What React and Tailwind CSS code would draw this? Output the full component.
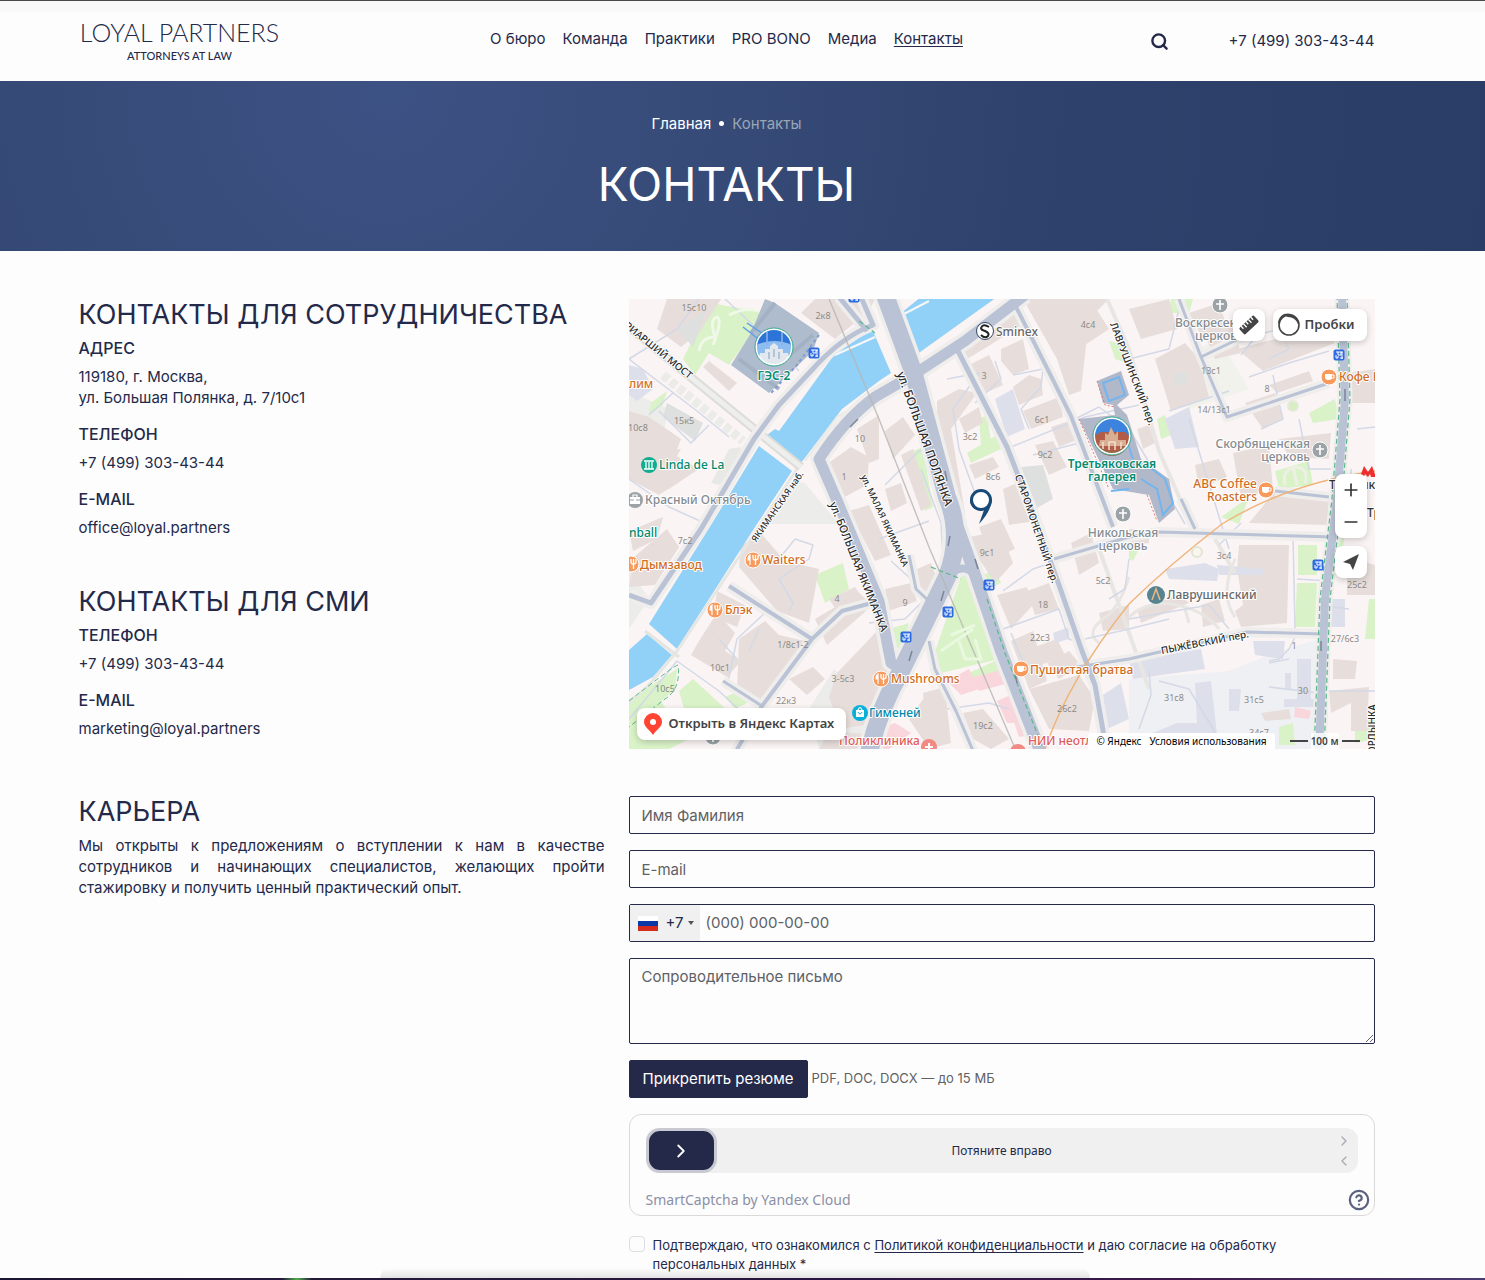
import React, { useState } from "react";
import { Search, ChevronRight, ChevronLeft, CircleQuestionMark, Plus, Minus } from "lucide-react";

const navItems = ["О бюро", "Команда", "Практики", "PRO BONO", "Медиа", "Контакты"];

const buildings = [
  "38,0 92,0 70,34 52,48 28,30", "186,0 246,0 240,12 206,40 172,14",
  "80,62 108,84 100,92 74,68", "0,112 20,118 52,140 46,156 70,170 30,196 0,180",
  "28,152 52,150 44,164 60,176 40,190", "198,165 222,148 240,158 238,186 212,200",
  "228,130 250,116 250,160 240,164", "220,212 240,206 262,256 246,262",
  "334,48 346,36 384,10 393,26 358,48 338,60", "340,66 360,56 374,86 352,96",
  "372,50 394,40 400,70 384,76 372,62", "384,88 400,76 412,80 414,96 390,106",
  "308,102 330,90 348,94 322,130 336,214 322,214 308,150",
  "330,120 350,108 354,124 336,134", "394,0 480,0 460,20 452,92 440,96 428,60",
  "446,14 466,8 480,30 456,46", "394,112 430,98 434,118 402,130",
  "422,128 440,122 450,140 430,148", "406,146 424,142 438,168 420,176",
  "340,166 364,158 370,168 346,180", "374,190 398,180 406,222 380,226",
  "350,228 372,220 386,250 362,260", "256,132 274,118 286,136 264,160",
  "272,156 284,150 302,206 292,212", "256,190 272,184 278,204 262,212",
  "526,60 556,44 570,60 580,98 542,112", "500,10 540,0 548,30 512,40",
  "574,32 604,28 612,54 586,60", "608,50 700,26 706,44 634,72",
  "616,104 646,94 654,120 634,130", "640,86 680,72 684,82 648,94",
  "560,14 590,4 598,28 572,36", "604,154 640,146 644,190 612,200",
  "566,166 590,160 598,178 570,190", "508,130 520,126 526,144 514,150",
  "648,190 700,200 698,226 620,224", "650,140 702,134 700,160 660,158",
  "720,74 746,70 746,104 722,104", "610,246 660,246 658,324 612,328 606,312 614,306 608,270",
  "508,310 550,296 560,304 512,324", "572,306 590,300 596,322 574,328",
  "704,360 728,362 726,380 704,380", "700,392 740,388 738,432 722,432 722,404 702,414",
  "632,414 660,410 662,420 636,422", "718,272 732,262 746,266 746,296 718,296",
  "5,258 38,230 50,248 26,286 0,288", "0,232 34,218 28,240 4,252",
  "112,248 130,232 156,262 190,270 180,324 148,312 110,268", "88,292 116,306 108,328 84,318",
  "70,342 88,314 106,334 96,352 112,362 98,378 62,356",
  "110,340 136,322 150,336 176,342 172,360 130,404 108,392",
  "186,320 230,294 244,306 198,346", "200,300 226,288 234,300 208,312",
  "160,380 184,368 196,380 178,396", "200,398 208,374 250,330 262,372 236,426 212,430",
  "256,290 282,284 288,302 260,312", "284,272 302,264 308,280 292,298",
  "340,238 372,232 384,264 366,284 350,260", "368,296 398,288 404,306 382,330",
  "398,292 420,284 430,310 406,316", "382,342 404,332 418,382 400,390",
  "400,350 428,340 436,356 412,366", "418,364 440,352 452,366 430,380",
  "400,390 450,376 466,400 460,432 420,430", "294,394 316,388 322,444 300,450",
  "334,414 354,410 380,440 362,450 344,440", "442,244 462,234 470,264 450,276",
  "470,314 500,306 500,330 474,332", "500,230 520,230 520,244 502,246",
  "200,432 250,436 240,450 190,450", "280,420 300,392 320,440 300,450",
];
const lilac = [
  "0,66 14,70 24,90 8,102 0,96", "366,100 384,90 396,130 378,138", "536,120 560,108 570,148 546,150",
  "536,270 576,264 590,270 588,282 540,280", "500,362 572,350 576,370 504,380", "624,342 656,342 654,360 626,356",
  "588,266 636,270 634,276 590,276", "702,300 716,300 716,328 702,328", "566,384 582,382 588,436 504,442 548,424 568,424",
  "668,360 682,360 682,400 668,400", "600,390 612,390 610,412 600,412", "474,396 492,384 500,420 478,430", "655,400 690,400 690,408 655,408",
  "424,334 440,328 440,340 426,344", "656,374 662,374 662,390 656,390",
];
const parks = [
  "82,4 138,14 100,66 80,54 66,76 54,60", "22,104 38,92 34,106 20,116", "284,152 294,148 304,208 296,212",
  "338,154 368,136 372,150 342,164", "350,120 358,116 362,142 352,146", "216,214 226,210 236,222 234,228",
  "186,276 214,264 220,290 196,304", "154,272 164,274 158,286 152,284", "334,272 344,270 356,304 370,360 312,374 302,364",
  "340,374 366,362 372,372 344,380", "354,276 366,270 372,284 360,290", "260,330 280,324 274,348 266,350",
  "50,392 64,380 110,422 80,440 58,420", "0,400 48,370 46,390 0,430", "0,430 30,400 60,440 40,450 0,450",
  "96,398 118,388 126,400 106,410", "646,172 680,162 684,186 650,190", "592,218 620,198 610,225", "680,114 706,100 710,120 684,124",
  "669,246 688,246 688,276 669,276", "668,284 688,284 686,328 666,328", "480,42 496,46 498,64 486,60", "528,120 536,116 542,136 532,140",
  "650,428 664,424 666,446 650,446", "708,250 716,230 712,270 704,280", "542,0 564,0 560,14 540,14", "726,418 746,412 746,440 726,444",
  "740,300 746,300 746,340 736,340", "500,232 510,250 504,262 500,260",
];
const clinics = ["318,382 340,370 350,390 332,396", "344,378 376,370 380,384 350,392", "368,402 386,394 394,424 378,424", "232,436 266,424 282,434 260,450 230,450", "384,420 398,420 402,436 390,438", "666,408 682,412 680,420 665,418"];

const minorStreets = [
  "0,60 68,112 100,138", "0,180 40,208 80,226", "96,0 124,26 170,72", "70,0 48,30 0,60", "20,116 44,94", "30,112 62,144 80,126",
  "292,170 312,224 314,260", "318,80 350,74 324,110 330,150 348,200", "384,76 414,70 412,88 392,110 400,130", "382,148 456,118 510,106",
  "346,104 372,80 366,62", "404,156 450,144 470,190", "500,60 540,50 550,10", "560,120 600,250", "540,112 600,92",
  "666,330 664,236 700,240", "670,330 660,350 650,360 640,362", "612,56 628,36 650,30 660,50 640,60", "620,78 660,64 700,52",
  "644,76 648,96 654,120 632,130", "670,120 680,170 702,170", "668,280 700,282", "704,308 720,310", "374,292 404,270 440,258",
  "374,330 430,310 440,340 456,346", "382,334 396,368 410,372", "318,410 360,404 380,410", "150,260 166,240 184,246 180,260 150,280 164,304 160,312",
  "140,310 108,340 100,378 94,386", "130,330 120,352", "90,340 108,360", "262,262 282,280 296,300 276,320 240,324", "250,240 300,222",
  "256,186 290,152 316,140", "520,372 522,396 510,430", "530,382 560,390 590,440", "640,364 660,360", "640,388 690,394",
  "500,320 580,306 600,330", "590,246 612,224", "700,392 746,392", "722,170 722,225", "728,130 746,128", "456,340 500,330 540,320",
  "480,300 496,290 500,260", "446,120 470,108 500,130 530,180 556,225", "0,420 30,384 48,362 90,392 120,420",
];

const mainRoads = [
  { d: "M256 -4 L284 72 L318 198 Q334 236 318 278 L272 372 Q250 410 240 454", w: 18 },
  { d: "M326 220 L344 270 L372 352 L412 454", w: 12 },
  { d: "M396 -4 L336 42 L284 76 L246 98 Q216 120 190 160 L210 206 L250 302 L262 364 L276 372", w: 11 },
  { d: "M318 278 Q334 262 346 276", w: 8 },
  { d: "M210 -2 L238 32", w: 5 },
  { d: "M232 -2 L244 26 Q212 38 182 72 L150 106 L125 140 L72 230 L22 304 L0 296", w: 5 },
  { d: "M328 50 L378 148 L408 225 L430 286 L453 352 L466 386 L478 454", w: 5 },
  { d: "M383 0 L417 67 L442 117 L484 228", w: 4 },
  { d: "M550 0 L572 58 L598 118 L700 84", w: 3 },
  { d: "M572 58 L630 30", w: 3 },
  { d: "M425 260 L500 238 L530 233 L704 238", w: 3 },
  { d: "M448 368 L500 360 L618 333 L693 335", w: 3 },
  { d: "M100 287 L183 340", w: 4 },
  { d: "M250 302 L213 312 L183 340 L133 407 L106 454", w: 4 },
  { d: "M94 382 L133 407", w: 3 },
  { d: "M280 256 L287 290 L302 304", w: 3 },
  { d: "M300 342 L306 370 L327 412 L345 454", w: 3 },
  { d: "M646 192 L700 198", w: 3 },
  { d: "M552 200 L566 230", w: 3 },
  { d: "M713 -4 L716 100 L708 200 L696 300 L690 454", w: 8 },
];

const houseNumbers = [
  ["15с10", 65, 12], ["2к8", 194, 20], ["15к5", 55, 125], ["10с8", 9, 132], ["10", 231, 143], ["1", 215, 181], ["4с4", 459, 29],
  ["3", 355, 80], ["3с2", 341, 141], ["6с1", 413, 124], ["9с2", 416, 159], ["8с6", 364, 181], ["13с1", 582, 75], ["8", 638, 93],
  ["14/13с1", 585, 114], ["7с2", 56, 245], ["4", 208, 303], ["1/8с1-2", 164, 349], ["10с1", 91, 372], ["10с5", 36, 393],
  ["3-5с3", 214, 383], ["22к3", 157, 405], ["9с1", 358, 257], ["9", 276, 307], ["18", 414, 309], ["22с3", 411, 342], ["26с2", 438, 413],
  ["19с2", 354, 430], ["5с2", 474, 285], ["3с4", 595, 260], ["25с2", 728, 289], ["27/6с3", 716, 343], ["1", 665, 350],
  ["30", 674, 395], ["31с8", 545, 402], ["31с5", 625, 404], ["34с7", 630, 437],
];

const streetNames = [
  ["ул. БОЛЬШАЯ ПОЛЯНКА", 295, 140, 70, 12], ["ул. БОЛЬШАЯ ЯКИМАНКА", 229, 268, 68, 11], ["ул. МАЛАЯ ЯКИМАНКА", 255, 222, 65, 9],
  ["ЯКИМАНСКАЯ наб.", 149, 208, -55, 9], ["СТАРОМОНЕТНЫЙ пер.", 407, 230, 71, 10], ["ЛАВРУШИНСКИЙ пер.", 503, 75, 69, 10],
  ["ПЫЖЁВСКИЙ пер.", 576, 344, -11, 10], ["РИАРШИЙ МОСТ", 29, 52, 39, 10], ["ОРДЫНКА", 744, 430, -90, 10],
];

const places = [
  ["Sminex", 367, 37, "#666666"], ["Linda de La", 30, 170, "#00896f"], ["Красный Октябрь", 16, 205, "#858b90"],
  ["nball", 0, 238, "#00896f"], ["лим", 0, 89, "#d87226"], ["Дымзавод", 11, 270, "#cf6d22"], ["Waiters", 133, 265, "#cf6d22"],
  ["Блэк", 96, 315, "#cf6d22"], ["Mushrooms", 262, 384, "#cf6d22"], ["Гименей", 240, 418, "#0089ad"], ["Поликлиника", 210, 446, "#df5c58"],
  ["НИИ неотло", 399, 446, "#df5c58"], ["Пушистая братва", 401, 375, "#cf6d22"], ["Лаврушинский", 538, 300, "#66696c"],
  ["Кофе Культ", 710, 82, "#cf6d22"], ["Третьяковская", 700, 190, "#333333"], ["Третьяков", 738, 218, "#333333"],
];

function CafeIcon({ x, y }) {
  return (
    <g transform={`translate(${x} ${y})`}>
      <circle r="8" fill="#f79a5c" stroke="#fff" strokeWidth="1" />
      <path d="M-4 -3H3V0Q3 3 0 3H-1Q-4 3 -4 0Z" fill="#fff" />
      <path d="M3 -2H5V1H2" fill="none" stroke="#fff" />
    </g>
  );
}

function FoodIcon({ x, y }) {
  return (
    <g transform={`translate(${x} ${y})`}>
      <circle r="8" fill="#f79a5c" stroke="#fff" strokeWidth="1" />
      <path d="M-3 5V-5Q-5 -4 -5 0H-3" fill="#fff" stroke="#fff" strokeWidth="1.2" />
      <path d="M0 -5V-2Q0 0 2 0Q5 0 5 -2V-5M2.5 -5V5" fill="none" stroke="#fff" strokeWidth="1.3" />
    </g>
  );
}

function ChurchIcon({ x, y }) {
  return (
    <g transform={`translate(${x} ${y})`}>
      <circle r="8" fill="#9ba3a6" stroke="#fff" strokeWidth="1" />
      <path d="M0 -5V5M-4 -1H4" stroke="#fff" strokeWidth="1.6" />
    </g>
  );
}

function StopIcon({ x, y }) {
  return (
    <g transform={`translate(${x} ${y})`}>
      <rect x="-5.5" y="-5.5" width="11" height="11" rx="2" fill="#2e6be0" />
      <path d="M-3 -3H4M-1 -3V0H2V-3M3 -3V4M-3 0V3H-1V1M1 3H4" fill="none" stroke="#fff" strokeWidth="1" />
    </g>
  );
}

function CityMap() {
  return (
    <svg
      viewBox="0 0 746 450"
      preserveAspectRatio="xMidYMid slice"
      className="block h-full w-full font-['Noto_Sans',sans-serif]"
      role="img"
      aria-label="Карта: ул. Большая Полянка, 7/10с1"
    >
      <rect width="746" height="450" fill="#fbf4f5" />
      <path d="M500 380L600 372L650 352L690 340V450H500Z" fill="#eff0f4" />
      <path d="M0 92L40 110L30 150L0 160Z M163 182L176 184L210 225H132Z M0 270L20 300L0 330Z M180 410L205 370L250 410L240 450H190Z" fill="#ecedea" />
      <path d="M100 150L112 148L114 168L90 186L82 184Z" fill="#e8e8e5" />
      <path d="M546 60L590 40L620 90L560 110Z" fill="#f1f2eb" />
      {parks.map((p) => <polygon key={p} points={p} fill="#d9f2c8" />)}
      {buildings.map((p) => <polygon key={p} points={p} fill="#e7dedb" />)}
      {lilac.map((p) => <polygon key={p} points={p} fill="#dddfea" />)}
      {clinics.map((p) => <polygon key={p} points={p} fill="#f9d6dc" />)}
      <path d="M48 30L78 10L64 48Z M38 104L74 124L66 142L34 118Z M392 168L414 166L424 200L406 210Z" fill="#dedfdf" />
      <path d="M544 76L556 72L560 82L546 88Z" fill="#dedfdf" />

      {/* river */}
      <path d="M205 56L243 30L250 46L262 74L250 82L213 110L172 164L138 136L146 130L150 132Z" fill="#91d1f8" />
      <path d="M272 14L292 -2H368L287 56Z" fill="#91d1f8" />
      <path d="M130 147L163 172L128 225L48 350L20 325L82 226Z" fill="#91d1f8" />
      <path d="M0 351L18 335L43 356L24 378L0 391Z" fill="#91d1f8" />
      <path d="M206 56L246 38M273 16L300 2" stroke="#f5f7f8" strokeWidth="2" />
      <path d="M168 170L48 352L20 386L0 404" fill="none" stroke="#e6e6e3" strokeWidth="3" />
      <path d="M176 162L208 118L250 92" fill="none" stroke="#e9e9e6" strokeWidth="2" />

      {/* bridge */}
      <path d="M0 28L172 168" stroke="#dcdcd9" strokeWidth="9" />
      <path d="M0 28L172 168" stroke="#eeeeec" strokeWidth="5" />
      <path d="M34 76L114 142" stroke="#ebebe8" strokeWidth="9" strokeDasharray="7 3" />
      <path d="M16 332L50 358" stroke="#e4e4e1" strokeWidth="3" />

      <path d="M478 0L500 50L530 152L562 225M468 244L520 390M586 240L606 274" fill="none" stroke="#e8e6e3" strokeWidth="4" />
      <path d="M500 318Q520 300 548 306T590 330M556 310L560 324M606 260Q590 296 606 318M500 278Q490 310 474 320Q456 334 470 344" fill="none" stroke="#e8e6e3" strokeWidth="3" />
      {minorStreets.map((p) => <polyline key={p} points={p} fill="none" stroke="#d3d9e6" strokeWidth="1.5" strokeLinejoin="round" />)}
      {mainRoads.map((r) => <path key={r.d} d={r.d} fill="none" stroke="#efeeec" strokeWidth={r.w + 7} strokeLinejoin="round" />)}
      {mainRoads.map((r) => <path key={r.d} d={r.d} fill="none" stroke="#bac2d5" strokeWidth={r.w} strokeLinejoin="round" />)}
      <path d="M708 -4L711 100L703 200L691 300L685 454M718 -4L721 100L713 200L701 300L695 454M230 22L246 34M302 268L332 280M358 300L376 354L416 454" fill="none" stroke="#5bb98b" strokeWidth="1.2" strokeDasharray="5 3" />
      <path d="M0 402Q46 366 49 366Q52 390 36 400L0 428" fill="none" stroke="#5bb98b" strokeWidth="1" strokeDasharray="5 3" />
      <path d="M200 0L250 120L300 248L388 454" fill="none" stroke="#b5b5b2" strokeWidth="1.4" opacity=".8" />
      <path d="M746 172Q660 184 593 225Q540 266 500 305Q440 380 416 450" fill="none" stroke="#efb478" strokeWidth="1.4" />
      <path d="M319 247L321 237M346 260L349 270M312 302L315 292M283 352L280 362M386 374L388 384M221 128L229 120M318 182L316 172M716 90V102M692 342V352" fill="none" stroke="#7c8597" strokeWidth="1.5" />
      <path d="M70 52Q72 38 86 38Q80 20 88 18Q94 20 84 46M100 16Q120 6 134 14" fill="none" stroke="#f0f8e8" strokeWidth="3" />
      <path d="M322 336L346 326M330 342L336 360H352L346 340M312 352L344 330" fill="none" stroke="#eaf8df" strokeWidth="3" />
      <path d="M656 186Q652 170 668 168Q680 170 676 184M664 168L668 186" fill="none" stroke="#eff0e4" strokeWidth="3" />
      <circle cx="568" cy="253" r="5" fill="#f7f7ee" stroke="#e2e4d6" strokeWidth="2" />
      <circle cx="664" cy="107" r="5" fill="#d8edc5" stroke="#e5ead9" strokeWidth="2" />

      {/* power station block */}
      <path d="M136 0L146 4L190 34L184 52L140 94L102 66L122 34Z" fill="#afbccd" />
      <path d="M122 34L146 4M156 60L184 36M110 60L150 90" stroke="#a3b1c4" strokeWidth="4" />
      <path d="M190 36L168 66L142 94" fill="none" stroke="#7f9dd1" strokeWidth="2" strokeDasharray="3 3" />
      <path d="M114 28L132 42M118 24L136 36" stroke="#5d9fe5" strokeWidth="1.5" />
      <circle cx="145" cy="48" r="18" fill="#2d74d8" />
      <path d="M127 46A18 18 0 0 0 163 46Q145 38 127 46Z" fill="#8cbcf0" />
      <path d="M130 58L131 54H136V50H141V47L145 44L149 47V50H154V54H159L160 58Q145 74 130 58Z" fill="#e3e8ee" />
      <path d="M138 46V33M153 46V33" stroke="#8fb2e6" strokeWidth="1.5" />
      <path d="M145 50V58M140 53V60M150 53V60" stroke="#a3b8d0" strokeWidth="1.5" />
      <circle cx="145" cy="48" r="18" fill="none" stroke="#fff" strokeWidth="2" />
      <circle cx="145" cy="48" r="19" fill="none" stroke="#35a78d" />

      {/* gallery block */}
      <path d="M468 82L492 72L500 96L488 106L498 116L512 160L540 180L546 210L530 224L520 196L484 190L450 120L486 116L484 106L474 104Z" fill="#b0b8ca" />
      <path d="M474 84L490 78L496 96L480 102ZM490 118L504 160M482 192L500 190M518 166L536 180L544 204L534 216L528 190L512 180" fill="none" stroke="#72b5ef" strokeWidth="2" />
      <path d="M468 82L476 106L486 108M450 120L480 190M518 196L528 222" fill="none" stroke="#e57b72" strokeWidth="1" strokeDasharray="2 2" />
      <circle cx="483" cy="137" r="18" fill="#3b83dc" />
      <path d="M465 137L472 133H496L501 138A18 18 0 0 1 465 140Z" fill="#b15d48" />
      <path d="M471 141H476V134L479 136L482 128L486 136L489 132V141H497V147H470Z" fill="#d9ae92" />
      <path d="M474 150V143M480 151V143H486V151M492 150V143" stroke="#f1dfd0" strokeWidth="1.5" fill="none" />
      <path d="M469 148Q483 159 497 148" stroke="#8c6a4a" strokeWidth="2" fill="none" />
      <circle cx="483" cy="137" r="18" fill="none" stroke="#fff" strokeWidth="2" />
      <circle cx="483" cy="137" r="19" fill="none" stroke="#35a78d" />

      {houseNumbers.map(([t, x, y]) => (
        <text key={t + x} x={x} y={y} textAnchor="middle" fontSize="9" fill="#8d8a86">{t}</text>
      ))}
      <g stroke="#fff" strokeWidth="2" strokeLinejoin="round" className="[paint-order:stroke]">
        {streetNames.map(([t, x, y, a, size]) => (
          <text key={t} transform={`translate(${x} ${y}) rotate(${a})`} textAnchor="middle" dominantBaseline="middle" fontSize={size} fontWeight="500" fill="#2c2c2c">{t}</text>
        ))}
        {places.map(([t, x, y, color]) => (
          <text key={t} x={x} y={y} fontSize="12" fontWeight="500" fill={color}>{t}</text>
        ))}
        <g fontSize="12" fontWeight="600" fill="#078b71" textAnchor="middle">
          <text x="145" y="81">ГЭС-2</text>
          <text x="483" y="169">Третьяковская</text>
          <text x="483" y="182">галерея</text>
        </g>
        <g fontSize="12" fontWeight="500" fill="#858b90">
          <text x="494" y="238" textAnchor="middle">Никольская</text>
          <text x="494" y="251" textAnchor="middle">церковь</text>
          <text x="681" y="149" textAnchor="end">Скорбященская</text>
          <text x="681" y="162" textAnchor="end">церковь</text>
          <text x="546" y="28">Воскресенская</text>
          <text x="566" y="41">церковь</text>
        </g>
        <g fontSize="12" fontWeight="500" fill="#cf6d22" textAnchor="end">
          <text x="628" y="189">ABC Coffee</text>
          <text x="628" y="202">Roasters</text>
        </g>
      </g>

      <CafeIcon x={700} y={78} />
      <CafeIcon x={637} y={191} />
      <CafeIcon x={392} y={370} />
      <FoodIcon x={2} y={265} />
      <FoodIcon x={124} y={261} />
      <FoodIcon x={86} y={311} />
      <FoodIcon x={252} y={380} />
      <ChurchIcon x={591} y={6} />
      <ChurchIcon x={691} y={151} />
      <ChurchIcon x={494} y={215} />
      <ChurchIcon x={84} y={438} />
      <StopIcon x={185} y={54} />
      <StopIcon x={225} y={-2} />
      <StopIcon x={360} y={286} />
      <StopIcon x={319} y={313} />
      <StopIcon x={277} y={338} />
      <StopIcon x={689} y={266} />
      <StopIcon x={710} y={56} />

      <circle cx="20" cy="166" r="8" fill="#11ad90" />
      <path d="M15 162H25M15 170H25M17 163V170M20 163V170M23 163V170" stroke="#fff" strokeWidth="1.3" />
      <circle cx="6" cy="201" r="8" fill="#9ba3a6" />
      <path d="M1 198H11V205H1Z" fill="#fff" />
      <path d="M4 198V196H8V198" fill="none" stroke="#fff" strokeWidth="1.2" />
      <path d="M1 201H5M7 201H11" stroke="#9ba3a6" />
      <circle cx="231" cy="414" r="8" fill="#0ab0d8" />
      <path d="M227 411H235V418H227Z" fill="#fff" />
      <path d="M229 411Q231 406 233 411" fill="none" stroke="#fff" strokeWidth="1.2" />
      <path d="M229 413Q231 417 233 413" fill="none" stroke="#0ab0d8" />
      <circle cx="300" cy="448" r="8" fill="#f08a83" />
      <path d="M300 444V452M296 448H304" stroke="#fff" strokeWidth="2" />
      <circle cx="389" cy="453" r="8" fill="#f08a83" />
      <circle cx="527" cy="296" r="9" fill="#558490" />
      <path d="M523 301L527 290L531 301" fill="none" stroke="#f0b686" strokeWidth="1.5" />
      <circle cx="356" cy="32" r="8.5" fill="#fff" stroke="#344563" />
      <path d="M360 28Q354 24 352 29Q352 31 356 32Q361 34 359 37Q356 40 352 36" fill="none" stroke="#222" strokeWidth="2" />
      <path d="M731 178L735 167L739 173L743 167L747 178H742L741 175L739 178L736 175L735 178Z" fill="#ee2f2d" />
      <path d="M341 201A11 11 0 0 0 352 212L355 211L350 225Q362 212 363 201Z" fill="#174a77" />
      <circle cx="352" cy="201" r="9.5" fill="#fff" stroke="#174a77" strokeWidth="3" />
    </svg>
  );
}

const mapButton = "flex items-center justify-center bg-white text-[#444444] shadow-[0_2px_6px_rgba(0,0,0,0.2)]";

function MapPanel() {
  return (
    <div className="relative h-[450px] overflow-hidden font-['Noto_Sans',sans-serif]">
      <CityMap />
      <div className="absolute top-[10px] right-2 flex gap-2">
        <button type="button" aria-label="Линейка" className={`${mapButton} size-8 rounded-lg`}>
          <svg width="22" height="22" viewBox="0 0 20 20">
            <g transform="rotate(-43 10 10)">
              <rect x="1" y="6" width="18" height="8" rx="1.5" fill="#444" />
              <path d="M4 6V9M7 6V10M10 6V9M13 6V10M16 6V9" stroke="#fff" strokeWidth="1.2" />
            </g>
          </svg>
        </button>
        <button type="button" className={`${mapButton} h-8 gap-1 rounded-lg pr-3 pl-1 text-[13px] font-semibold`}>
          <svg width="24" height="24" viewBox="0 0 24 24">
            <circle cx="12" cy="12" r="10" fill="none" stroke="#444" strokeWidth="1.6" />
            <path d="M1 11Q1 4 7 1Q17 -1 21 7Q22 10 21 11Q18 4 11 4Q7 2 5 6Q3 8 1 11Z" fill="#444" />
          </svg>
          Пробки
        </button>
      </div>
      <div className="absolute top-[175px] right-2 flex w-8 flex-col rounded-lg bg-white shadow-[0_2px_6px_rgba(0,0,0,0.2)]">
        <button type="button" aria-label="Приблизить" className="flex h-8 items-center justify-center text-[#333333]">
          <Plus size={20} strokeWidth={2} />
        </button>
        <button type="button" aria-label="Отдалить" className="flex h-8 items-center justify-center text-[#333333]">
          <Minus size={20} strokeWidth={2} />
        </button>
      </div>
      <button type="button" aria-label="Моё местоположение" className={`${mapButton} absolute top-[247px] right-2 size-8 rounded-lg`}>
        <svg width="18" height="18" viewBox="0 0 18 18">
          <path d="M17 1L1 9L8 11L11 17Z" fill="#444" />
        </svg>
      </button>
      <a href="#map" className={`${mapButton} absolute bottom-[9px] left-2 h-8 gap-1 rounded-lg pr-3 pl-1 text-[13px] font-semibold`}>
        <svg width="24" height="24" viewBox="0 0 24 24">
          <path d="M12 1A9 9 0 0 0 3 10C3 15 9 18 12 23C15 18 21 15 21 10A9 9 0 0 0 12 1Z" fill="#ff4433" />
          <circle cx="12" cy="10" r="3" fill="#fff" />
        </svg>
        Открыть в Яндекс Картах
      </a>
      <div className="absolute right-0 bottom-0 flex h-4 items-center text-[10px] leading-4 text-black">
        <div className="flex gap-2 rounded-t bg-white px-2">
          <span>© Яндекс</span>
          <a href="#terms">Условия использования</a>
        </div>
        <div className="flex items-center gap-[3px] px-[15px]">
          <span className="h-[2px] w-[18px] bg-[#444444]" />
          <span className="bg-white/80 font-semibold text-[#444444]">100 м</span>
          <span className="h-[2px] w-[18px] bg-[#444444]" />
        </div>
      </div>
    </div>
  );
}

function Logo() {
  return (
    <a href="#home" className="flex w-[202px] flex-col items-center">
      <span className="font-['Lato',sans-serif] text-[25px] leading-[26px] font-light whitespace-nowrap">LOYAL PARTNERS</span>
      <span className="mt-1 font-['Lato',sans-serif] text-[11px] leading-[14px] font-medium whitespace-nowrap">ATTORNEYS AT LAW</span>
    </a>
  );
}

function ContactBlock({ title, items }) {
  return (
    <section>
      <h2 className="text-[27px] leading-[31px]">{title}</h2>
      <dl className="mt-2 flex flex-col gap-4">
        {items.map((item) => (
          <div key={item.label}>
            <dt className="mb-2 text-base leading-5 font-medium">{item.label}</dt>
            {item.lines.map((line) => (
              <dd key={line} className="leading-[21px]">
                {item.href ? <a href={item.href}>{line}</a> : line}
              </dd>
            ))}
          </div>
        ))}
      </dl>
    </section>
  );
}

const field = "w-full rounded-[2px] border border-[#24294a] bg-transparent px-3 placeholder:text-[#5e6165]";

function CareerForm() {
  const [slide, setSlide] = useState(0);
  const [agree, setAgree] = useState(false);

  return (
    <form className="flex flex-col gap-4" onSubmit={(e) => e.preventDefault()}>
      <input className={`${field} h-[38px]`} type="text" aria-label="Имя Фамилия" placeholder="Имя Фамилия" />
      <input className={`${field} h-[38px]`} type="email" aria-label="E-mail" placeholder="E-mail" />
      <div className="flex h-[38px] rounded-[2px] border border-[#24294a]">
        <div className="flex w-[70px] items-center bg-[#f0f0f0] pl-2">
          <svg width="20" height="15" viewBox="0 0 20 15" className="mr-2 shrink-0">
            <path d="M0 0H20V5H0Z" fill="#fff" />
            <path d="M0 5H20V10H0Z" fill="#0b38a6" />
            <path d="M0 10H20V15H0Z" fill="#d52b1e" />
          </svg>
          <select aria-label="Код страны" className="w-[22px] appearance-none bg-transparent">
            <option>+7</option>
          </select>
          <svg width="6" height="4" viewBox="0 0 6 4" className="pointer-events-none shrink-0">
            <path d="M0 0H6L3 4Z" fill="#555" />
          </svg>
        </div>
        <input className="min-w-0 grow bg-transparent px-[6px] placeholder:text-[#5e6165]" type="tel" aria-label="Телефон" placeholder="(000) 000-00-00" />
      </div>
      <textarea className={`${field} block h-[86px] resize-y py-[6px] leading-6`} aria-label="Сопроводительное письмо" placeholder="Сопроводительное письмо" />
      <div className="flex items-center gap-1">
        <button type="button" className="h-[38px] rounded-[2px] border border-[#24294a] bg-[#24294a] px-[13px] text-white">Прикрепить резюме</button>
        <span className="text-[13px] text-[#5e6165]">PDF, DOC, DOCX — до 15 МБ</span>
      </div>

      <div className="h-[102px] rounded-xl border border-[#d9d9d9] pt-[13px] pl-4 font-['Noto_Sans',sans-serif]">
        <div className="relative mr-4 h-[45px] rounded-xl bg-[#f0f0f0]">
          <input
            type="range"
            min="0"
            max="100"
            value={slide}
            onChange={(e) => setSlide(e.target.value)}
            aria-label="Потяните вправо"
            className="block h-full w-full appearance-none rounded-xl bg-transparent [&::-webkit-slider-thumb]:h-[45px] [&::-webkit-slider-thumb]:w-[71px] [&::-webkit-slider-thumb]:appearance-none [&::-webkit-slider-thumb]:rounded-[14px] [&::-webkit-slider-thumb]:border-[3px] [&::-webkit-slider-thumb]:border-[#c9c9d3] [&::-webkit-slider-thumb]:bg-[#24294a]"
          />
          <div className="pointer-events-none absolute inset-0 flex items-center justify-center text-xs text-[#24294a]">Потяните вправо</div>
          <div className="pointer-events-none absolute inset-y-0 left-0 flex w-[71px] items-center justify-center text-white">
            <ChevronRight size={22} strokeWidth={2} />
          </div>
          <div className="pointer-events-none absolute inset-y-0 right-[6px] flex flex-col items-center justify-center gap-1 text-[#a9aab8]">
            <ChevronRight size={16} />
            <ChevronLeft size={16} />
          </div>
        </div>
        <div className="mt-4 flex items-center justify-between pr-1 text-sm leading-[22px] text-[#8b90a6]">
          SmartCaptcha by Yandex Cloud
          <button type="button" aria-label="Справка" className="text-[#5c617f]">
            <CircleQuestionMark size={22} strokeWidth={2.4} />
          </button>
        </div>
      </div>

      <label className="mt-1 flex items-start gap-2 text-[13px] leading-[19px]">
        <input
          type="checkbox"
          checked={agree}
          onChange={(e) => setAgree(e.target.checked)}
          className="size-4 shrink-0 appearance-none rounded border border-[#d9dee2] checked:bg-[#24294a]"
        />
        <span className="max-w-[660px]">
          Подтверждаю, что ознакомился с <a href="#policy" className="underline underline-offset-2">Политикой конфиденциальности</a> и даю согласие на обработку персональных данных *
        </span>
      </label>
    </form>
  );
}

const container = "mx-auto w-full max-w-[1320px] px-3";

export default function App() {
  return (
    <div className="relative flex min-h-screen flex-col border-t border-[#4a4a4a] bg-[#fdfdfd] font-['Inter',sans-serif] text-[15px] text-[#24294a]">
      <header className="h-20 bg-[linear-gradient(#f9f9f9_11px,#fdfdfd_11px)] pr-8">
        <div className={`${container} grid h-full grid-cols-[1fr_auto_1fr] items-center`}>
          <Logo />
          <nav className="flex gap-[17px] pb-[3px]">
            {navItems.map((item) => (
              <a key={item} href="#nav" className={item === "Контакты" ? "underline underline-offset-2" : ""}>{item}</a>
            ))}
          </nav>
          <div className="flex items-center justify-end gap-[60px]">
            <button type="button" aria-label="Поиск"><Search size={19} strokeWidth={3} /></button>
            <a href="tel:+74993034344">+7 (499) 303-43-44</a>
          </div>
        </div>
      </header>

      <div className="h-[170px] bg-[radial-gradient(circle_at_26%_5%,#3d5284_0%,#364a77_32%,#2f426d_58%,#293d66_100%)] pr-8">
        <div className={`${container} flex flex-col items-center pt-8 text-white`}>
          <div className="flex items-center gap-2 leading-[21px]">
            <a href="#home">Главная</a>
            <span className="size-[5px] rounded-full bg-white" />
            <span className="text-[#9aa5b5]">Контакты</span>
          </div>
          <h1 className="mt-[23px] text-[46px] leading-[54px]">КОНТАКТЫ</h1>
        </div>
      </div>

      <main className="pt-12 pr-8">
        <div className={`${container} grid grid-cols-12 gap-x-6 gap-y-[47px]`}>
          <div className="col-span-5 flex flex-col gap-12">
            <ContactBlock
              title="КОНТАКТЫ ДЛЯ СОТРУДНИЧЕСТВА"
              items={[
                { label: "АДРЕС", lines: ["119180, г. Москва,", "ул. Большая Полянка, д. 7/10с1"] },
                { label: "ТЕЛЕФОН", lines: ["+7 (499) 303-43-44"], href: "tel:+74993034344" },
                { label: "E-MAIL", lines: ["office@loyal.partners"], href: "mailto:office@loyal.partners" },
              ]}
            />
            <ContactBlock
              title="КОНТАКТЫ ДЛЯ СМИ"
              items={[
                { label: "ТЕЛЕФОН", lines: ["+7 (499) 303-43-44"], href: "tel:+74993034344" },
                { label: "E-MAIL", lines: ["marketing@loyal.partners"], href: "mailto:marketing@loyal.partners" },
              ]}
            />
          </div>
          <div className="col-span-7">
            <MapPanel />
          </div>
          <section className="col-span-5">
            <h2 className="text-[27px] leading-[31px]">КАРЬЕРА</h2>
            <p className="mt-2 text-justify leading-[21px]">
              Мы открыты к предложениям о вступлении к нам в качестве сотрудников и начинающих специалистов, желающих пройти стажировку и получить ценный практический опыт.
            </p>
          </section>
          <div className="col-span-7">
            <CareerForm />
          </div>
        </div>
      </main>

      <div className="pointer-events-none absolute inset-x-0 bottom-[2px] flex justify-center pr-4">
        <div className="h-[10px] w-[710px] rounded-t-xl bg-linear-to-b from-transparent to-black/10" />
      </div>
      <div className="mt-auto h-[2px] bg-[linear-gradient(90deg,#1c1530,#241a3c_19%,#4fae4a_20%,#231a3a_21%,#2a1440_60%,#3d1a4a_80%,#4a3a70)]" />
    </div>
  );
}
